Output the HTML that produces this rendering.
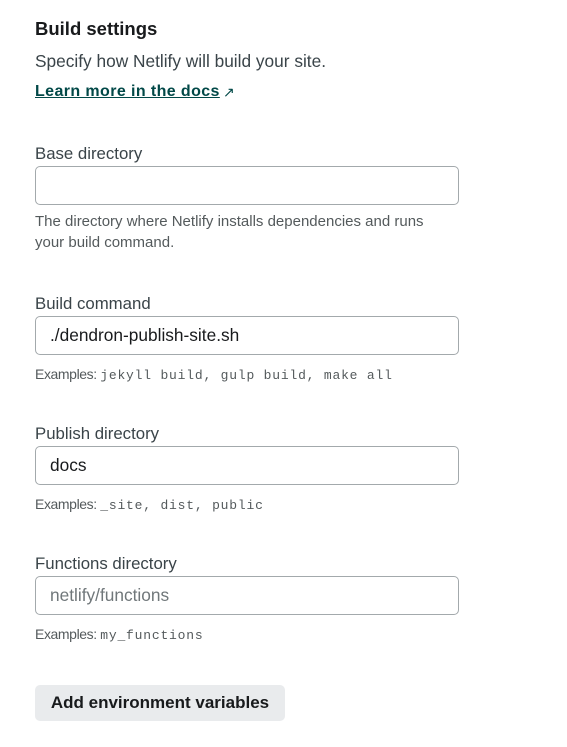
<!DOCTYPE html>
<html><head><style>
body{margin:0;width:567px;height:747px;background:#fff;font-family:"Liberation Sans",sans-serif;color:#2d3b41;position:relative;overflow:hidden}
.a{position:absolute;white-space:nowrap}
.t{left:35px;top:18px;font-size:18.5px;font-weight:bold;color:#181a1c}
.s{left:35px;top:51px;font-size:17.3px;color:#3a4449}
.l{left:35px;top:83px;font-size:16px;letter-spacing:0.4px;font-weight:bold;color:#014847;text-decoration:underline}
.lab{left:35px;font-size:16.8px;color:#3a4449}
.in{position:absolute;left:35px;width:424px;height:39px;border:1px solid #a3a9ac;border-radius:5px;box-sizing:border-box;font-size:17.3px;color:#181a1c;line-height:37px;padding-left:14px}
.h{left:35px;font-size:15px;color:#545a5c}
.ex{left:35px;font-size:14px;color:#545a5c;letter-spacing:-0.4px}
.ex code{font-family:"Liberation Mono",monospace;font-size:13px;letter-spacing:0.8px}
.btn{position:absolute;left:35px;top:685px;width:250px;height:36px;background:#e9ebed;border-radius:5px;font-size:17px;font-weight:bold;color:#181a1c;line-height:36px;text-align:center}
</style></head><body>
<div class="a t">Build settings</div>
<div class="a s">Specify how Netlify will build your site.</div>
<div class="a l">Learn more in the docs</div><div class="a" style="left:223px;top:84px;font-size:14px;color:#014847">↗</div>
<div class="a lab" style="top:144px">Base directory</div>
<div class="in" style="top:166px"></div>
<div class="a h" style="top:213px">The directory where Netlify installs dependencies and runs</div>
<div class="a h" style="top:234px">your build command.</div>
<div class="a lab" style="top:294px">Build command</div>
<div class="in" style="top:316px">./dendron-publish-site.sh</div>
<div class="a ex" style="top:366px">Examples: <code>jekyll build, gulp build, make all</code></div>
<div class="a lab" style="top:424px">Publish directory</div>
<div class="in" style="top:446px">docs</div>
<div class="a ex" style="top:496px">Examples: <code>_site, dist, public</code></div>
<div class="a lab" style="top:554px">Functions directory</div>
<div class="in" style="top:576px;color:#70777a">netlify/functions</div>
<div class="a ex" style="top:626px">Examples: <code>my_functions</code></div>
<div class="btn">Add environment variables</div>
</body></html>
